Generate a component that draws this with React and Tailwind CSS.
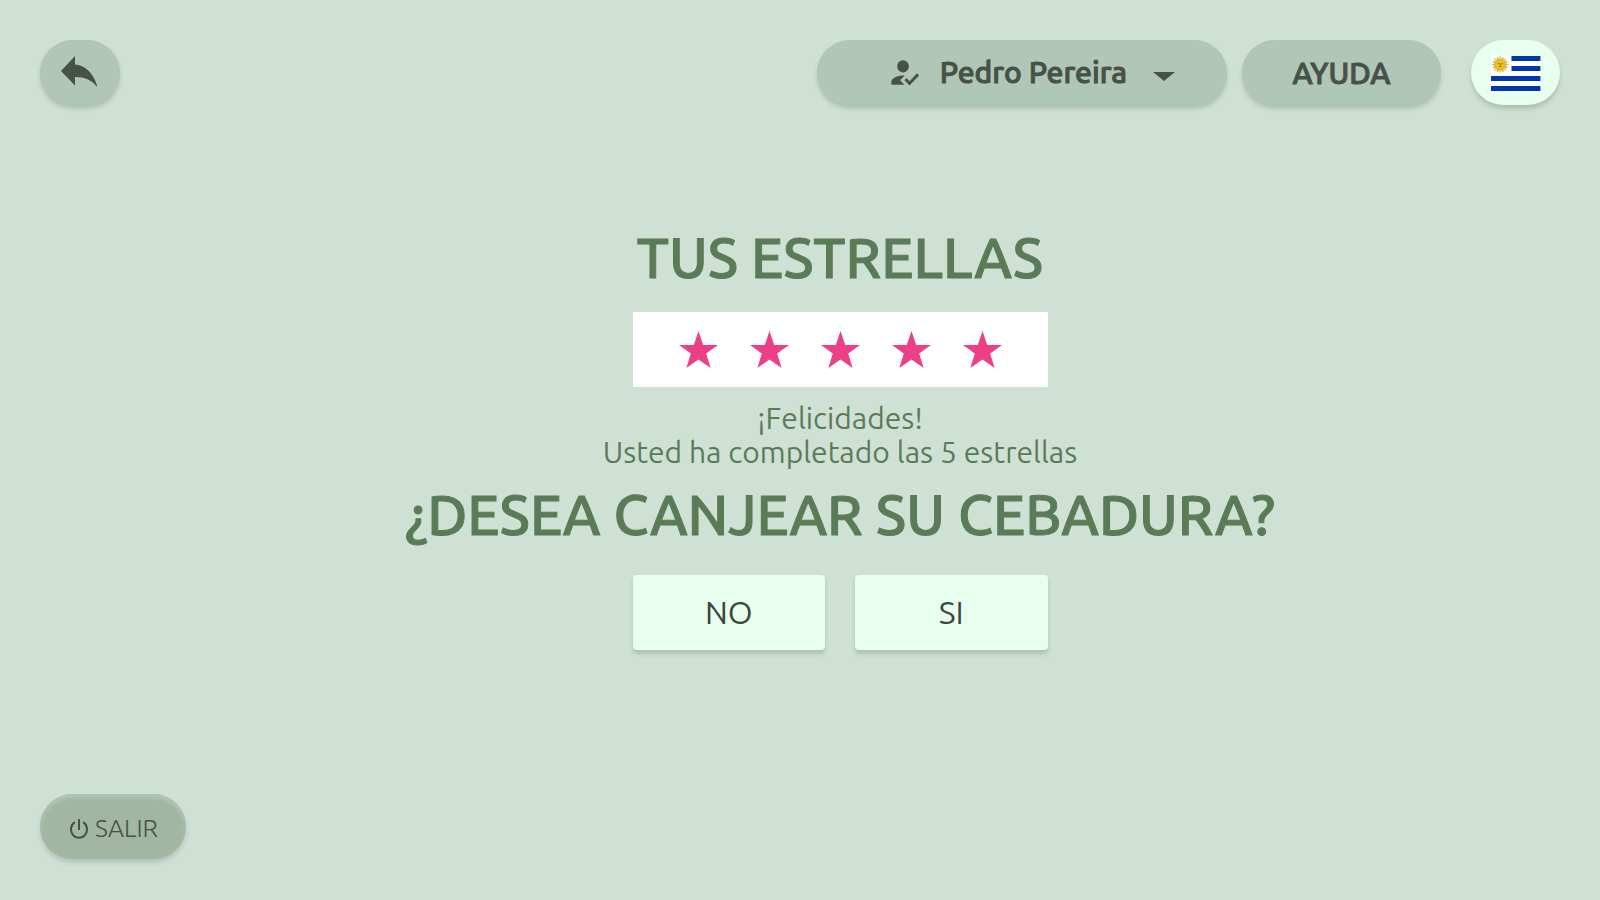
const STAR = '19.5,0 24.2,13.9 39,13.9 27.2,22.6 31.6,37 19.5,28.4 7.4,37 11.8,22.6 0,13.9 14.8,13.9';

function ReplyIcon() {
  return (
    <svg className="h-8 w-9" viewBox="0 0 36 32" aria-hidden="true">
      <path
        fill="currentColor"
        d="M0 15 14 0V8.4C24 9 33.500 17.500 36.500 31.500 31 24 24 21 14 21V29.500Z"
      />
    </svg>
  );
}

function UserCheckIcon() {
  return (
    <svg className="h-[37px] w-[35px]" viewBox="0 0 24 24" preserveAspectRatio="none" aria-hidden="true">
      <path
        fill="currentColor"
        d="M9 17l3-2.940c-.390-.040-.680-.060-1-.060-2.670 0-8 1.340-8 4v2h9l-3-3zm2-5c2.210 0 4-1.790 4-4s-1.790-4-4-4-4 1.790-4 4 1.790 4 4 4zM15.470 20.500L12 17l1.400-1.410 2.070 2.080 5.130-5.170 1.400 1.410z"
      />
    </svg>
  );
}

function CaretIcon() {
  return (
    <svg className="h-[9px] w-[22px]" viewBox="0 0 22 9" aria-hidden="true">
      <path fill="currentColor" d="M0 0H22L11 9Z" />
    </svg>
  );
}

function PowerIcon() {
  return (
    <svg className="h-5 w-[18px]" viewBox="0 0 18 20" fill="none" stroke="currentColor" strokeWidth="2" aria-hidden="true">
      <path d="M9 0V11" />
      <path d="M4.800 3.200A8 8.400 0 1 0 13.200 3.200" />
    </svg>
  );
}

const RAYS = Array.from({ length: 16 }, (_, i) => i * 22.5);

function UruguayFlag() {
  return (
    <svg className="h-[35px] w-[50px]" viewBox="0 0 50 35" role="img" aria-label="Uruguay">
      <rect width="49.500" height="35" fill="#fff" />
      <path fill="#0038a8" d="M20.500 0H49V5H20.500ZM20.500 10H49V15H20.500ZM0 20H49V25H0ZM0 30H49V35H0Z" />
      <path fill="#8fa5cf" d="M49 0h1v5h-1zM49 10h1v5h-1zM49 20h1v5h-1zM49 30h1v5h-1z" />
      {RAYS.map((angle, i) => (
        <path
          key={angle}
          d={i % 2 ? 'M8 8.600 8.400 2.500 9.200 0.300 10 2.500 10.400 8.600Z' : 'M7.400 8.600 9.200 -0.200 11 8.600Z'}
          fill={i % 2 ? '#d9ae22' : '#e8bd18'}
          stroke="#a8892c"
          strokeWidth="0.200"
          transform={`rotate(${angle} 9.200 8.600)`}
        />
      ))}
      <circle cx="9.200" cy="8.600" r="4.900" fill="#edc515" stroke="#d9a915" strokeWidth="0.400" />
      <path d="M6.800 7.700h2M9.900 7.700h2M8 10.500h2.600M9.300 7.700v1.700" stroke="#7a5a10" strokeWidth="0.800" fill="none" />
    </svg>
  );
}

const shadow = 'shadow-[0_4px_4px_rgba(0,0,0,0.15)]';
const strong = 'font-medium [-webkit-text-stroke:1px_currentColor]';
const pill = `flex h-[65px] items-center justify-center rounded-full bg-[#b0c6b6] text-[#485148] ${shadow}`;
const heading = `text-[56px] leading-[62px] text-[#5b7b57] ${strong}`;
const answer = `h-[75px] flex-1 rounded bg-[#e8ffef] pb-[2px] text-[32px] text-[#3e453e] ${shadow}`;

export default function App() {
  return (
    <div className="flex min-h-screen flex-col bg-[#cfe1d5] px-10 pt-10 pb-[41px] font-['Ubuntu','Noto_Sans',sans-serif]">
      <header className="flex items-center justify-between">
        <button type="button" aria-label="Volver" className={`${pill} w-20 pr-[2px] pb-[2px]`}>
          <ReplyIcon />
        </button>
        <div className="flex items-center">
          <button type="button" className={`${pill} ${strong} w-[410px] pl-[18px] text-[30px]`}>
            <UserCheckIcon />
            <span className="ml-[18px]">Pedro Pereira</span>
            <span className="mt-2 ml-[26px]">
              <CaretIcon />
            </span>
          </button>
          <button type="button" className={`${pill} ${strong} ml-[15px] w-[199px] pt-[2px] text-[30px]`}>
            AYUDA
          </button>
          <button
            type="button"
            className={`ml-[30px] flex h-[65px] w-[89px] items-center justify-center rounded-full bg-[#e8ffef] pt-[2px] ${shadow}`}
          >
            <UruguayFlag />
          </button>
        </div>
      </header>

      <main className="flex flex-1 flex-col items-center pt-[122px] pl-20 text-center">
        <h1 className={heading}>TUS ESTRELLAS</h1>
        <div
          role="img"
          aria-label="5 estrellas"
          className="mt-[23px] flex h-[75px] w-[415px] items-center justify-center gap-8 bg-white"
        >
          {[1, 2, 3, 4, 5].map((n) => (
            <svg key={n} className="h-[37px] w-[39px]" viewBox="0 0 39 37" aria-hidden="true">
              <polygon points={STAR} fill="#eb3f87" />
            </svg>
          ))}
        </div>
        <p className="mt-[14px] text-[30px] leading-[34px] text-[#5b7b57]">
          ¡Felicidades!
          <br />
          Usted ha completado las 5 estrellas
        </p>
        <h2 className={`${heading} mt-[15px]`}>¿DESEA CANJEAR SU CEBADURA?</h2>
        <div className="mt-[29px] flex w-[415px] gap-[30px]">
          <button type="button" className={answer}>NO</button>
          <button type="button" className={answer}>SI</button>
        </div>
      </main>

      <footer className="flex">
        <button
          type="button"
          className="flex h-[65px] w-[146px] items-center justify-center gap-[7px] rounded-full bg-[#a2b6a4] pt-1 pl-[2px] text-[25px] font-light text-[#485148] shadow-[0_4px_4px_rgba(0,0,0,0.12),inset_0_4px_4px_#b0c6b6]"
        >
          <PowerIcon />
          SALIR
        </button>
      </footer>
    </div>
  );
}
